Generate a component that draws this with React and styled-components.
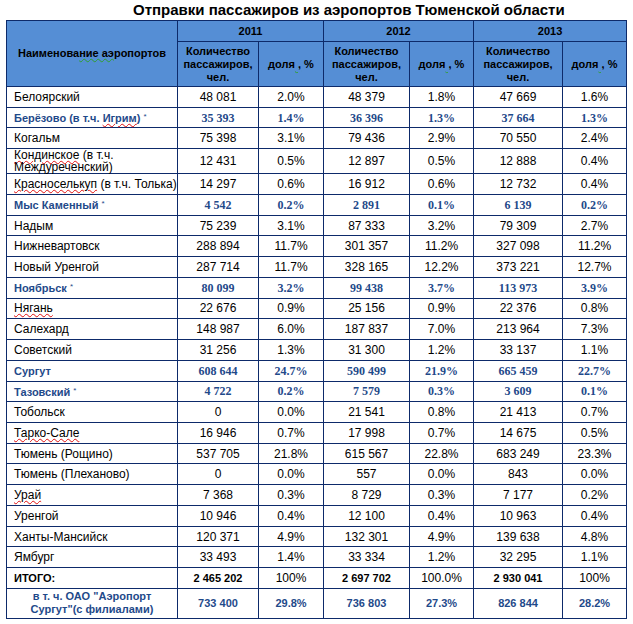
import React from "react";
import styled, { createGlobalStyle, css } from "styled-components";

const Global = createGlobalStyle`
  html, body { margin: 0; padding: 0; background: #ffffff; }
  body { font-family: "Liberation Sans", Arial, sans-serif; color: #000; }
`;

const Page = styled.div`
  width: 633px;
  height: 624px;
  padding: 0 0 0 6px;
  box-sizing: border-box;
  overflow: hidden;
`;

const Title = styled.h1`
  margin: 0;
  height: 20px;
  line-height: 20px;
  padding-left: 127px;
  font-size: 15px;
  font-weight: bold;
  color: #000;
  white-space: nowrap;
`;

const Table = styled.table`
  border-collapse: collapse;
  table-layout: fixed;
  width: 621px;
  font-size: 12px;
`;

const BORDER = "1px solid #0d2a6a";

const HeadCell = styled.th`
  background: #558ed5;
  border: ${BORDER};
  padding: 0 2px;
  font-size: 11px;
  font-weight: bold;
  color: #000;
  text-align: center;
  vertical-align: middle;
  line-height: 13px;
`;

const YearRow = styled.tr`
  height: 21px;
`;

const SubRow = styled.tr`
  height: 45px;
`;

const Row = styled.tr`
  height: ${(p) => (p.$tall ? "30px" : p.$double ? "24px" : "20.74px")};
`;

const NameCell = styled.td`
  border: ${BORDER};
  padding: 0 0 0 7px;
  text-align: left;
  vertical-align: middle;
  white-space: nowrap;
  line-height: 12px;
  ${(p) =>
    p.$blue &&
    css`
      color: #1f4a8a;
      font-weight: bold;
      font-size: 11px;
    `}
  ${(p) =>
    p.$total &&
    css`
      font-weight: bold;
      font-size: 11px;
    `}
  ${(p) =>
    p.$sub &&
    css`
      color: #1f4a8a;
      font-weight: bold;
      font-size: 11px;
      white-space: normal;
      text-align: center;
      line-height: 13px;
      padding: 0 14px 0 14px;
    `}
`;

const NumCell = styled.td`
  border: ${BORDER};
  padding: 0;
  text-align: center;
  vertical-align: middle;
  white-space: nowrap;
  line-height: 12px;
  ${(p) =>
    p.$kind === "blue" &&
    css`
      color: #1f4a8a;
      font-weight: bold;
      font-family: "Liberation Serif", "Times New Roman", serif;
      font-size: 12px;
    `}
  ${(p) =>
    p.$kind === "bold" &&
    css`
      font-weight: bold;
      font-size: 11px;
    `}
  ${(p) =>
    p.$kind === "sub" &&
    css`
      color: #1f4a8a;
      font-weight: bold;
      font-size: 11px;
    `}
`;

const Spell = styled.span`
  text-decoration: underline wavy ${(p) => (p.$green ? "#2f9e2f" : "#e01010")};
  text-decoration-thickness: 1px;
  text-underline-offset: 1px;
`;

const Star = styled.span`
  font-size: 8px;
  vertical-align: 3px;
  font-weight: normal;
`;

const rows = [
  { name: "Белоярский", v: ["48 081", "2.0%", "48 379", "1.8%", "47 669", "1.6%"] },
  {
    name: (
      <>
        Берёзово (в т.ч. <Spell>Игрим</Spell>) <Star>*</Star>
      </>
    ),
    blue: true,
    v: ["35 393", "1.4%", "36 396", "1.3%", "37 664", "1.3%"],
  },
  { name: "Когальм", v: ["75 398", "3.1%", "79 436", "2.9%", "70 550", "2.4%"] },
  {
    name: (
      <>
        <Spell>Кондинское</Spell> (в т.ч.
        <br />
        Междуреченский)
      </>
    ),
    double: true,
    v: ["12 431", "0.5%", "12 897", "0.5%", "12 888", "0.4%"],
  },
  {
    name: (
      <>
        <Spell>Красноселькуп</Spell> (в т.ч. Толька)
      </>
    ),
    v: ["14 297", "0.6%", "16 912", "0.6%", "12 732", "0.4%"],
  },
  {
    name: (
      <>
        Мыс Каменный <Star>*</Star>
      </>
    ),
    blue: true,
    v: ["4 542", "0.2%", "2 891", "0.1%", "6 139", "0.2%"],
  },
  { name: "Надым", v: ["75 239", "3.1%", "87 333", "3.2%", "79 309", "2.7%"] },
  { name: "Нижневартовск", v: ["288 894", "11.7%", "301 357", "11.2%", "327 098", "11.2%"] },
  { name: "Новый Уренгой", v: ["287 714", "11.7%", "328 165", "12.2%", "373 221", "12.7%"] },
  {
    name: (
      <>
        Ноябрьск <Star>*</Star>
      </>
    ),
    blue: true,
    v: ["80 099", "3.2%", "99 438", "3.7%", "113 973", "3.9%"],
  },
  { name: <Spell>Нягань</Spell>, v: ["22 676", "0.9%", "25 156", "0.9%", "22 376", "0.8%"] },
  { name: "Салехард", v: ["148 987", "6.0%", "187 837", "7.0%", "213 964", "7.3%"] },
  { name: "Советский", v: ["31 256", "1.3%", "31 300", "1.2%", "33 137", "1.1%"] },
  { name: "Сургут", blue: true, v: ["608 644", "24.7%", "590 499", "21.9%", "665 459", "22.7%"] },
  {
    name: (
      <>
        Тазовский <Star>*</Star>
      </>
    ),
    blue: true,
    v: ["4 722", "0.2%", "7 579", "0.3%", "3 609", "0.1%"],
  },
  { name: "Тобольск", v: ["0", "0.0%", "21 541", "0.8%", "21 413", "0.7%"] },
  { name: <Spell>Тарко-Сале</Spell>, v: ["16 946", "0.7%", "17 998", "0.7%", "14 675", "0.5%"] },
  { name: "Тюмень (Рощино)", v: ["537 705", "21.8%", "615 567", "22.8%", "683 249", "23.3%"] },
  { name: "Тюмень (Плеханово)", v: ["0", "0.0%", "557", "0.0%", "843", "0.0%"] },
  { name: <Spell>Урай</Spell>, v: ["7 368", "0.3%", "8 729", "0.3%", "7 177", "0.2%"] },
  { name: "Уренгой", v: ["10 946", "0.4%", "12 100", "0.4%", "10 963", "0.4%"] },
  { name: "Ханты-Мансийск", v: ["120 371", "4.9%", "132 301", "4.9%", "139 638", "4.8%"] },
  { name: "Ямбург", v: ["33 493", "1.4%", "33 334", "1.2%", "32 295", "1.1%"] },
];

export default function App() {
  return (
    <Page>
      <Global />
      <Title>Отправки пассажиров из аэропортов Тюменской области</Title>
      <Table>
        <colgroup>
          <col style={{ width: 171 }} />
          <col style={{ width: 81 }} />
          <col style={{ width: 65 }} />
          <col style={{ width: 86 }} />
          <col style={{ width: 64 }} />
          <col style={{ width: 89 }} />
          <col style={{ width: 64 }} />
        </colgroup>
        <thead>
          <YearRow>
            <HeadCell rowSpan={2}>
              Наименова<Spell $green>ние аэ</Spell>ропортов
            </HeadCell>
            <HeadCell colSpan={2}>2011</HeadCell>
            <HeadCell colSpan={2}>2012</HeadCell>
            <HeadCell colSpan={2}>2013</HeadCell>
          </YearRow>
          <SubRow>
            {[0, 1, 2].map((i) => (
              <React.Fragment key={i}>
                <HeadCell>
                  Количество
                  <br />
                  пассажиров,
                  <br />
                  чел.
                </HeadCell>
                <HeadCell>
                  доля<Spell $green> ,</Spell> %
                </HeadCell>
              </React.Fragment>
            ))}
          </SubRow>
        </thead>
        <tbody>
          {rows.map((r, i) => (
            <Row key={i} $double={r.double}>
              <NameCell $blue={r.blue}>{r.name}</NameCell>
              {r.v.map((val, j) => (
                <NumCell key={j} $kind={r.blue ? "blue" : undefined}>
                  {val}
                </NumCell>
              ))}
            </Row>
          ))}
          <Row>
            <NameCell $total>ИТОГО:</NameCell>
            <NumCell $kind="bold">2 465 202</NumCell>
            <NumCell>100%</NumCell>
            <NumCell $kind="bold">2 697 702</NumCell>
            <NumCell>100.0%</NumCell>
            <NumCell $kind="bold">2 930 041</NumCell>
            <NumCell>100%</NumCell>
          </Row>
          <Row $tall>
            <NameCell $sub>в т. ч. ОАО "Аэропорт Сургут"(с филиалами)</NameCell>
            <NumCell $kind="sub">733 400</NumCell>
            <NumCell $kind="sub">29.8%</NumCell>
            <NumCell $kind="sub">736 803</NumCell>
            <NumCell $kind="sub">27.3%</NumCell>
            <NumCell $kind="sub">826 844</NumCell>
            <NumCell $kind="sub">28.2%</NumCell>
          </Row>
        </tbody>
      </Table>
    </Page>
  );
}
